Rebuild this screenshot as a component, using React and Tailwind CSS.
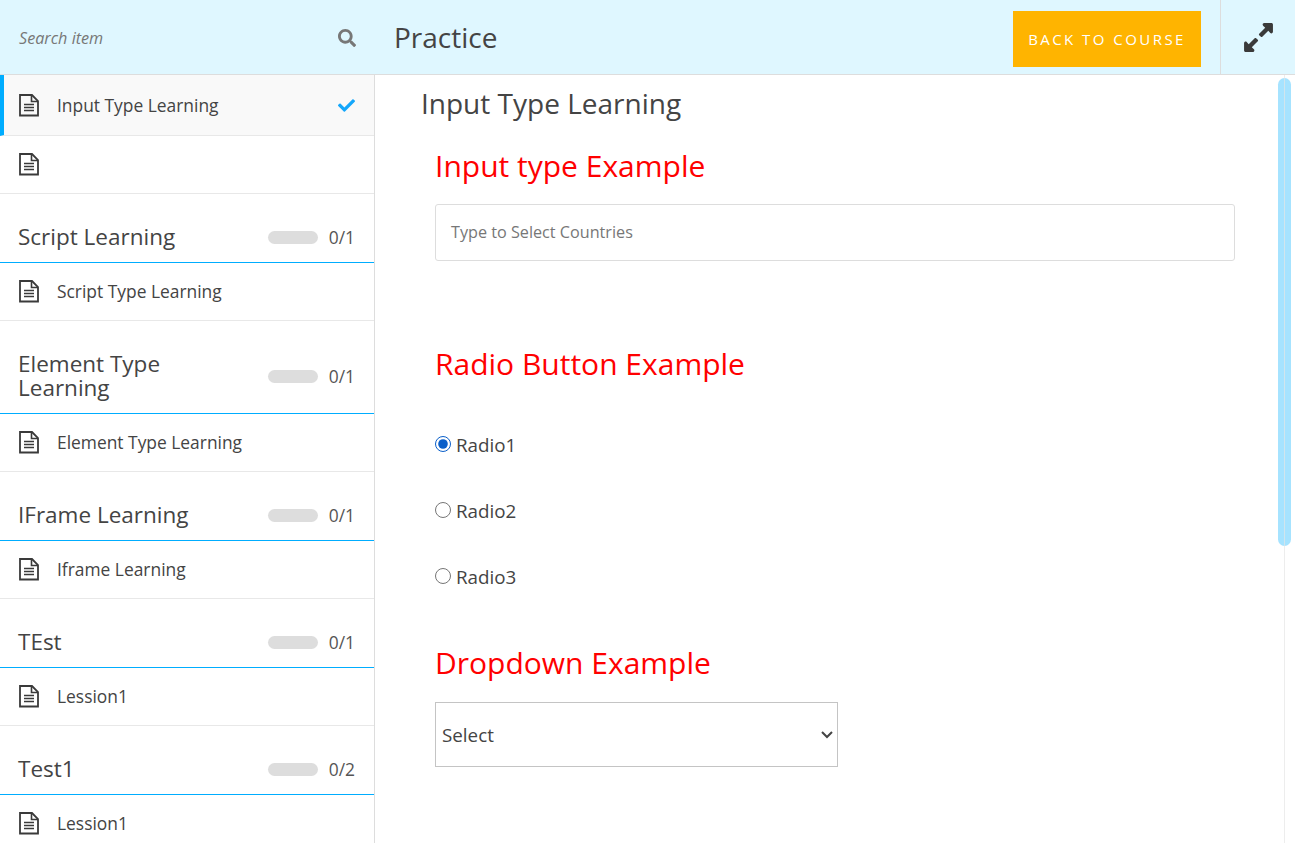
import React from "react";
import { FaSearch, FaCheck, FaExpandAlt } from "react-icons/fa";

const FileIcon = () => (
  <svg width="20" height="23" viewBox="0 0 20 23" fill="none" stroke="#3a3a3a" className="shrink-0">
    <path d="M1 1H13L19 7V21.5H1Z" strokeWidth="1.8" />
    <path d="M12.5 1V7.5H19" strokeWidth="1.6" />
    <path d="M5 10.5H15M5 13.5H15M5 16.5H15" strokeWidth="1.5" />
  </svg>
);

const Item = ({ label, active, h = "h-[58px]" }) => (
  <div className={`flex items-center ${h} pr-[19px] border-b border-[#e8e8e8] ${active ? "bg-[#f9f9f9] border-l-4 border-l-[#00adff] pl-[15px]" : "pl-[19px]"}`}>
    <FileIcon />
    <span className={`ml-[18px] text-[17.4px] text-[#444] flex-1 leading-none ${active ? "pt-[2px]" : ""}`}>{label}</span>
    {active && <FaCheck className="text-[#14a7fb] text-[17px]" />}
  </div>
);

const Section = ({ title, count, h }) => (
  <div className={`flex flex-col justify-end ${h} pl-[18px] pr-[19px] pb-[13px] border-b border-[#00adff]`}>
    <div className="flex items-center">
      <span className="flex-1 text-[22.5px] leading-[24px] text-[#444] pr-[70px]">{title}</span>
      <span className="w-[50px] h-[13px] rounded-full bg-[#dddddd]" />
      <span className="w-[37px] text-right text-[17.4px] leading-[24px] text-[#555]">{count}</span>
    </div>
  </div>
);

const Heading = ({ children, className = "" }) => (
  <h2 className={`text-[30px] leading-[36px] text-[#ff0000] ${className}`}>{children}</h2>
);

const Radio = ({ label, checked, className = "" }) => (
  <label className={`flex items-center h-[24px] text-[#444] text-[18.8px] ${className}`}>
    <input type="radio" name="r" defaultChecked={checked} className="w-[16px] h-[16px] m-0 mr-[5px] mb-[2px] accent-[#0a5fc9]" />
    {label}
  </label>
);

export default function App() {
  return (
    <div className="h-[843px] w-[1295px] overflow-hidden flex flex-col bg-white relative" style={{ fontFamily: '"Open Sans", sans-serif' }}>
      <header className="flex h-[75px] shrink-0 bg-[#dff7ff] border-b border-[#dddddd]">
        <div className="w-[375px] flex items-center pl-[19px] pr-[19px] pt-[2px]">
          <span className="flex-1 italic text-[16.2px] text-[#777]">Search item</span>
          <FaSearch className="text-[#777] text-[18px]" />
        </div>
        <div className="flex-1 flex items-center pl-[19px] text-[#444] text-[28px]">Practice</div>
        <div className="flex items-center pr-[19px] pt-[4px]">
          <div className="w-[188px] h-[56px] flex items-center justify-center bg-[#ffb400] text-white text-[15px] tracking-[2.45px]">BACK TO COURSE</div>
        </div>
        <div className="w-[75px] border-l border-[#dddddd] flex items-center justify-center">
          <FaExpandAlt className="text-[#3a3a3a] text-[33px]" />
        </div>
      </header>
      <div className="flex flex-1 min-h-0">
        <aside className="w-[375px] shrink-0 border-r border-[#dddddd] overflow-hidden">
          <Item label="Input Type Learning" active h="h-[61px]" />
          <Item label="" />
          <Section title="Script Learning" count="0/1" h="h-[69px]" />
          <Item label="Script Type Learning" />
          <Section title="Element Type Learning" count="0/1" h="h-[93px]" />
          <Item label="Element Type Learning" />
          <Section title="IFrame Learning" count="0/1" h="h-[69px]" />
          <Item label="Iframe Learning" />
          <Section title="TEst" count="0/1" h="h-[69px]" />
          <Item label="Lession1" />
          <Section title="Test1" count="0/2" h="h-[69px]" />
          <Item label="Lession1" />
        </aside>
        <main className="flex-1 pl-[46px] pt-[11px]">
          <h1 className="text-[28px] leading-[34px] text-[#444]">Input Type Learning</h1>
          <div className="pl-[14px]">
            <Heading className="mt-[28px]">Input type Example</Heading>
            <div className="mt-[20px] w-[800px] h-[57px] border border-[#dddddd] rounded-[3px] flex items-center pl-[15px] text-[16.2px] text-[#777]">Type to Select Countries</div>
            <Heading className="mt-[85px]">Radio Button Example</Heading>
            <div className="mt-[51px] flex flex-col gap-[42px]">
              <Radio label="Radio1" checked />
              <Radio label="Radio2" />
              <Radio label="Radio3" />
            </div>
            <Heading className="mt-[56px]">Dropdown Example</Heading>
            <div className="relative mt-[21px] w-[403px] h-[65px]">
              <select className="appearance-none w-full h-full border border-[#c4c4c4] bg-white text-[18.8px] text-[#444] pl-[6px] pt-[2px]">
                <option>Select</option>
              </select>
              <svg width="12" height="8" viewBox="0 0 12 8" fill="none" stroke="#444" strokeWidth="2" className="absolute right-[5px] top-[29px]">
                <path d="M1 1L6 6L11 1" />
              </svg>
            </div>
          </div>
        </main>
      </div>
      <div className="absolute left-[1278px] top-[78px] w-[13px] h-[468px] rounded-full bg-[#a6e3ff]" />
      <div className="absolute left-[1284px] top-[75px] bottom-0 w-px bg-[#e5e5e5] opacity-70" />
    </div>
  );
}
